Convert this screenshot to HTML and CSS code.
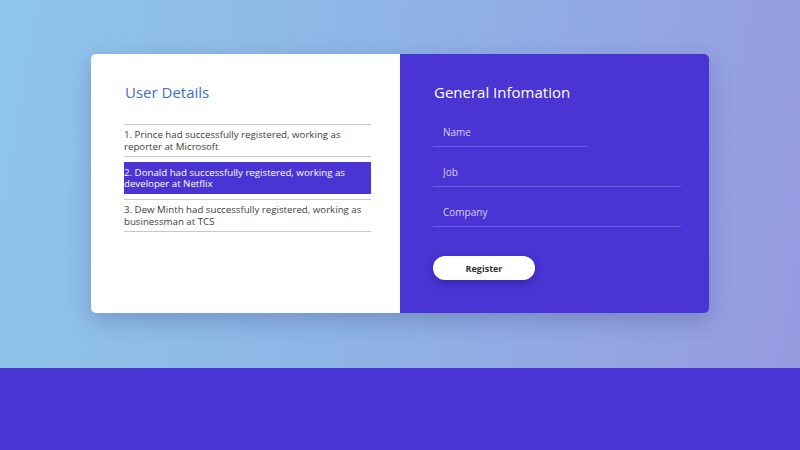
FILE: index.html
```html
<!DOCTYPE html>
<html lang="en">
<head>
<meta charset="utf-8">
<title>User Details</title>
<link rel="stylesheet" href="styles.css">
</head>
<body>
<div class="page">
  <section class="hero">
    <div class="card">
      <div class="panel panel-left">
        <h2 class="title title-blue">User Details</h2>
        <ul class="user-list">
          <li class="user-item">1. Prince had successfully registered, working as reporter at Microsoft</li>
          <li class="user-item active">2. Donald had successfully registered, working as developer at Netflix</li>
          <li class="user-item">3. Dew Minth had successfully registered, working as businessman at TCS</li>
        </ul>
      </div>
      <div class="panel panel-right">
        <h2 class="title title-white">General Infomation</h2>
        <form class="form">
          <input class="field field-short" type="text" placeholder="Name">
          <input class="field" type="text" placeholder="Job">
          <input class="field" type="text" placeholder="Company">
          <button class="btn" type="button">Register</button>
        </form>
      </div>
    </div>
  </section>
  <footer class="band"></footer>
</div>
</body>
</html>
```

FILE: styles.css
```css
* { box-sizing: border-box; }
html, body { margin: 0; padding: 0; }
body {
  font-family: "Open Sans", "Liberation Sans", sans-serif;
  width: 800px;
  height: 450px;
  overflow: hidden;
}
.page {
  display: flex;
  flex-direction: column;
  height: 450px;
}
.hero {
  height: 368px;
  background: linear-gradient(100deg, #8ec6eb 0%, #8fb2e5 50%, #969ae0 100%);
  padding-top: 54px;
  display: flex;
  justify-content: center;
  align-items: flex-start;
}
.band {
  flex: 1;
  background: #4a34d4;
}
.card {
  width: 618px;
  height: 259px;
  display: flex;
  border-radius: 5px;
  overflow: hidden;
  box-shadow: 0 8px 22px rgba(40, 50, 110, 0.26);
}
.panel {
  flex: 1;
  padding-top: 29px;
}
.panel-left {
  background: #ffffff;
  padding-left: 33px;
  padding-right: 29px;
}
.panel-right {
  background: #4a34d4;
  padding-left: 33px;
  padding-right: 28px;
}
.title {
  margin: 0;
  font-size: 15px;
  line-height: 18px;
  font-weight: 400;
  padding-left: 1px;
}
.title-blue { color: #3b70d0; }
.title-white { color: #ffffff; }
.user-list {
  list-style: none;
  margin: 23px 0 0;
  padding: 0;
}
.user-item {
  border-top: 1px solid #c9c9c9;
  border-bottom: 1px solid #c9c9c9;
  padding: 4px 0 3.5px;
  margin: 5px 0;
  font-size: 9.7px;
  line-height: 11.5px;
  color: #3d3d3d;
}
.user-item:first-child { margin-top: 0; }
.user-item.active {
  background: #4a34d4;
  border-color: transparent;
  color: #ffffff;
}
.form {
  display: flex;
  flex-direction: column;
  align-items: flex-start;
  margin-top: 16px;
}
.field {
  width: 248px;
  height: 30px;
  margin-bottom: 10px;
  border: none;
  border-bottom: 1px solid #6c5ee3;
  background: transparent;
  padding: 0 10px;
  font-family: inherit;
  font-size: 10px;
  color: #ffffff;
  outline: none;
}
.field-short { width: 155px; }
.field::placeholder { color: #d6d1f6; }
.btn {
  margin-top: 19px;
  width: 102px;
  height: 24px;
  border: none;
  border-radius: 12px;
  background: #ffffff;
  color: #333333;
  font-family: inherit;
  font-size: 9px;
  font-weight: 700;
  box-shadow: 0 3px 8px rgba(20, 10, 80, 0.3);
  cursor: pointer;
}
```
